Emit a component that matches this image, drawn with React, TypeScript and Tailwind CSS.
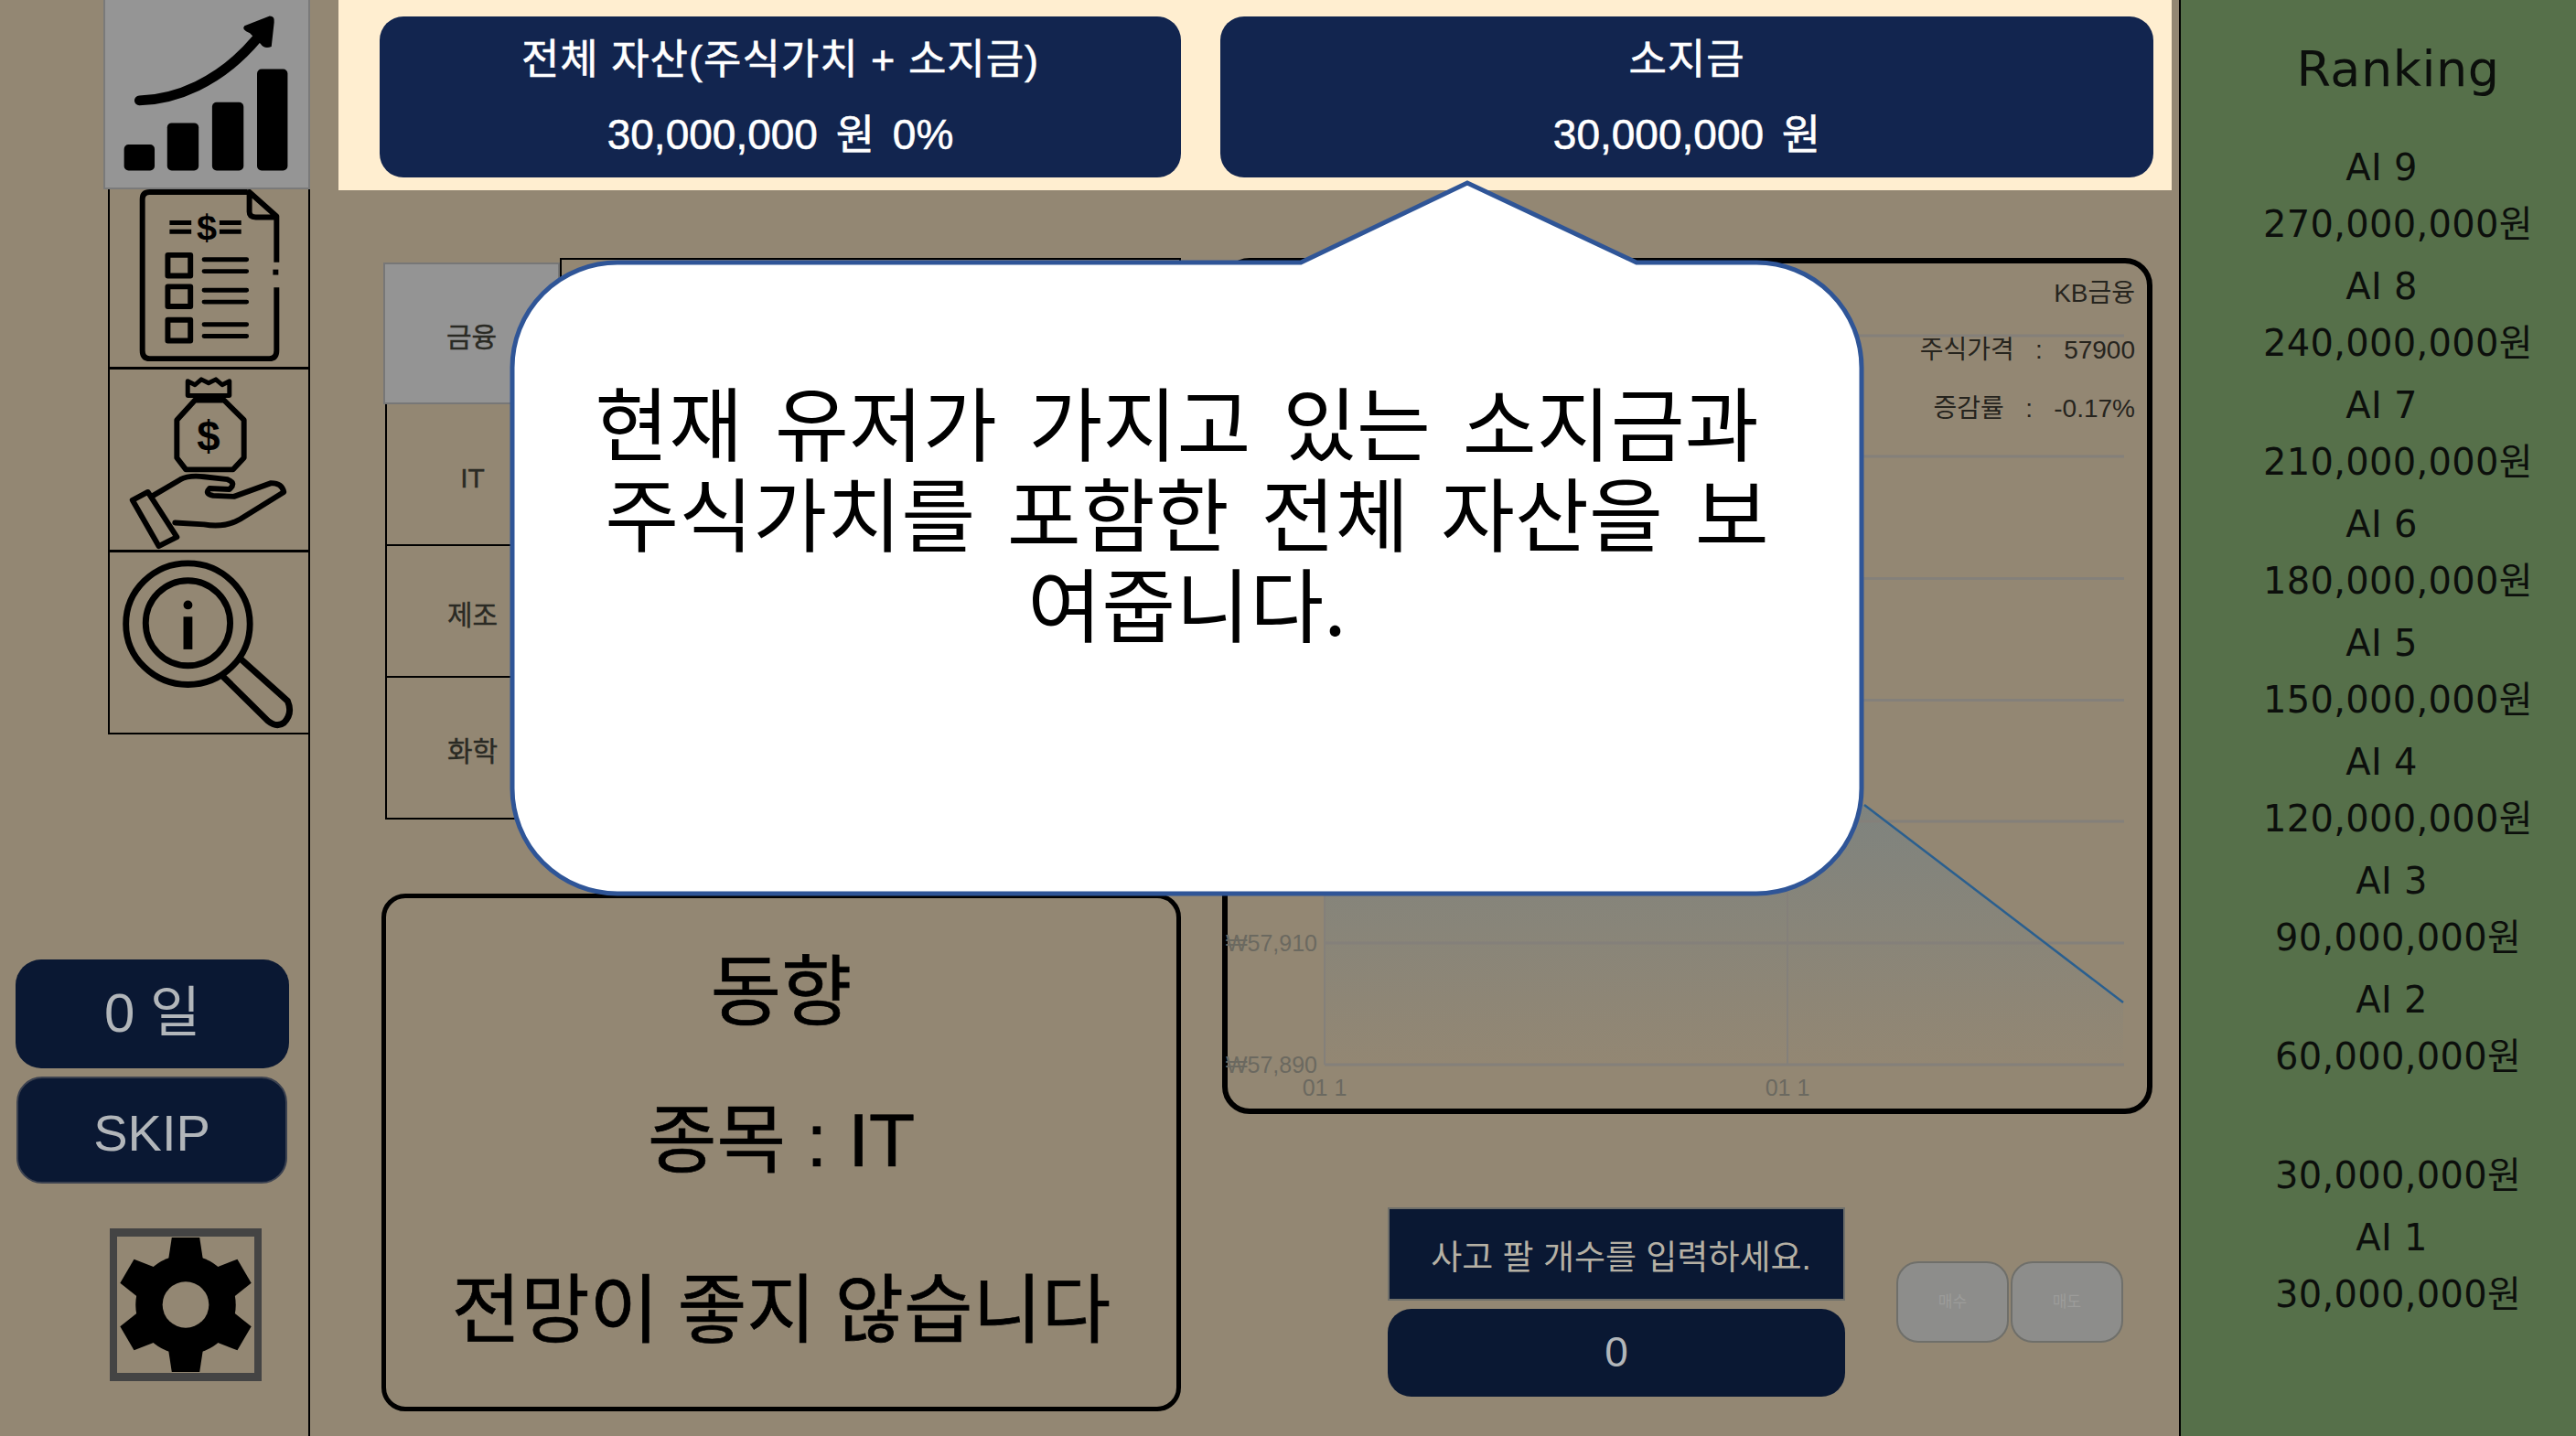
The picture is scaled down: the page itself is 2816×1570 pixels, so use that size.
import React from "react";

const Row = ({ box, h, last, children }: { box: string; h: string; last?: boolean; children: React.ReactNode }) => (
  <div className={`ml-[118px] w-[221px] border-black ${h} ${last ? "border-x-2 border-b-2" : "border-l-2 border-b-[3px]"}`}>
    <svg viewBox={box} preserveAspectRatio="none" className="block h-full w-full" fill="none" stroke="#000">
      {children}
    </svg>
  </div>
);

const ranks = [
  ["AI 9", "270,000,000원"],
  ["AI 8", "240,000,000원"],
  ["AI 7", "210,000,000원"],
  ["AI 6", "180,000,000원"],
  ["AI 5", "150,000,000원"],
  ["AI 4", "120,000,000원"],
  ["AI 3", "90,000,000원"],
  ["AI 2", "60,000,000원"],
  ["", "30,000,000원"],
  ["AI 1", "30,000,000원"],
];

const tabs = [
  { t: "금융", c: "h-[155px] bg-[#949494] border-2 border-[#777777]" },
  { t: "IT", c: "h-[155px] border-x-2 border-b-2 border-black ml-[2px]" },
  { t: "제조", c: "h-[144px] border-x-2 border-b-2 border-black ml-[2px]" },
  { t: "화학", c: "h-[155px] border-x-2 border-b-2 border-black ml-[2px]" },
];

export default function App() {
  return (
    <div className="relative flex h-[1570px] w-[2816px] overflow-hidden bg-[#938773] text-black [font-family:'Liberation_Sans','Noto_Sans_CJK_KR',sans-serif]">
      {/* left rail */}
      <aside className="flex h-full w-[339px] shrink-0 flex-col border-r-2 border-black">
        <div className="ml-[113px] h-[207px] w-[226px] border-x-2 border-b-2 border-[#7a7a7a] bg-[#959595]">
          <svg viewBox="113 0 226 207" className="block h-full w-full">
            <rect x="134" y="160" width="34" height="29" rx="5" />
            <rect x="182" y="136" width="35" height="53" rx="5" />
            <rect x="232" y="113" width="35" height="76" rx="5" />
            <rect x="282" y="76" width="34" height="113" rx="5" />
            <path d="M151 111 C190 110 240 92 282 42" fill="none" stroke="#000" strokeWidth="11" strokeLinecap="round" />
            <path d="M268 28 L296 17 Q302 17 301 24 L298 51 Q290 54 286 48 L274 36 Q264 32 268 28 Z" />
          </svg>
        </div>
        <Row box="118 207 221 197" h="h-[197px]">
          <g strokeWidth="6" strokeLinejoin="round">
            <path d="M270 210 H162 Q154 210 154 218 V386 Q154 395 162 395 H294 Q302 395 302 386 V316" />
            <path d="M302 288 V237 L272 210 V232 Q272 238 279 238 H302" />
            <path d="M301 296 V302" />
            <path d="M184 244 H208 M184 254 H208 M239 244 H263 M239 254 H263" strokeWidth="5" />
            <rect x="182" y="280" width="25" height="23" />
            <rect x="182" y="315" width="25" height="22" />
            <rect x="182" y="352" width="25" height="23" />
            <path d="M222 285 H269 M222 298 H269 M222 319 H269 M222 332 H269 M222 357 H269 M222 370 H269" strokeWidth="5" strokeLinecap="round" />
          </g>
          <text x="225" y="263" textAnchor="middle" fontSize="40" fontWeight="700" fill="#000" stroke="none" fontFamily="Liberation Sans">$</text>
        </Row>
        <Row box="118 404 221 200" h="h-[200px]">
          <g strokeWidth="6" strokeLinejoin="round" strokeLinecap="round">
            <path d="M204 417 L212 421 L219 415 L227 419 L235 415 L242 421 L250 417 V433 H204 Z" strokeWidth="5" />
            <path d="M212 438 L192 460 V502 L202 515 H254 L266 502 V460 L244 438 Z" />
            <path d="M164 545 L196 526 Q205 521 222 523 L248 526 Q258 530 250 537 L228 536 Q222 542 232 544 L255 545 L296 530 Q308 530 310 540 L262 570 Q245 580 222 576 L190 574" />
            <path d="M143 549 L160 540 L192 590 L172 600 Z" />
          </g>
          <text x="227" y="494" textAnchor="middle" fontSize="46" fontWeight="700" fill="#000" stroke="none" fontFamily="Liberation Sans">$</text>
        </Row>
        <Row box="118 604 221 199" h="h-[199px]" last>
          <g strokeWidth="7">
            <ellipse cx="205" cy="683" rx="69" ry="67" />
            <ellipse cx="205" cy="682" rx="47" ry="47" />
            <path d="M205 675 V711" strokeWidth="10" />
            <circle cx="205" cy="662" r="5" fill="#000" stroke="none" />
            <path d="M262 720 L316 768 Q322 782 312 792 Q304 798 294 790 L241 738" strokeLinejoin="round" />
          </g>
        </Row>
        <div className="ml-[17px] mt-[246px] flex h-[119px] w-[299px] items-center justify-center rounded-[28px] bg-[#0a1833] text-[60px] text-[#b2b6ba]">
          <span className="-translate-y-[1px]">0 일</span>
        </div>
        <div className="ml-[18px] mt-[9px] flex h-[117px] w-[296px] items-center justify-center rounded-[28px] border-2 border-[#3c4250] bg-[#0a1833] text-[56px] text-[#b2b6ba]">
          <span className="translate-y-[3px]">SKIP</span>
        </div>
        <div className="ml-[120px] mt-[49px] h-[167px] w-[166px] border-x-[8px] border-y-[9px] border-[#444444]">
          <svg viewBox="-74 -74 148 148" className="block h-full w-full" preserveAspectRatio="none">
            {[0, 60, 120, 180, 240, 300].map((r) => (
              <path key={r} transform={`rotate(${r})`} d="M-20 -40 L-15 -73 H15 L20 -40 Z" fill="#000" />
            ))}
            <circle r="54" fill="#000" />
            <circle r="25" fill="#938773" />
          </svg>
        </div>
      </aside>

      {/* centre */}
      <main className="w-[2043px] shrink-0">
        <header className="ml-[31px] flex h-[208px] w-[2004px] gap-[43px] bg-[#ffeed0] pl-[45px] pt-[18px]">
          <div className="flex h-[176px] w-[876px] flex-col items-center rounded-[26px] bg-[#12254f] text-white [-webkit-text-stroke:0.6px_white]">
            <div className="mt-[20px] text-[45px] leading-[56px] tracking-[1px]">전체 자산(주식가치 + 소지금)</div>
            <div className="mt-[25px] text-[46px] leading-[56px] [word-spacing:7px]">30,000,000 원 0%</div>
          </div>
          <div className="flex h-[176px] w-[1020px] flex-col items-center rounded-[26px] bg-[#12254f] text-white [-webkit-text-stroke:0.6px_white]">
            <div className="mt-[20px] text-[45px] leading-[56px] tracking-[1px]">소지금</div>
            <div className="mt-[25px] text-[46px] leading-[56px] [word-spacing:7px]">30,000,000 원</div>
          </div>
        </header>

        <div className="ml-[78px] mt-[74px] flex gap-[45px]">
          <div className="w-[874px]">
            <div className="flex h-[611px] items-start">
              <div className="ml-[2px] mt-[5px] flex w-[193px] flex-col">
                {tabs.map((x) => (
                  <div key={x.t} className={`flex items-center justify-center pt-[8px] text-[30px] text-[#2a2a24] [-webkit-text-stroke:0.4px_#2a2a24] ${x.c}`}>{x.t}</div>
                ))}
              </div>
              <div className="h-[611px] flex-1 border-2 border-black" />
            </div>
            <div className="mt-[84px] flex h-[566px] flex-col items-center rounded-[26px] border-[5px] border-black text-[82px] leading-[100px] [-webkit-text-stroke:0.7px_black]">
              <div className="mt-[53px] text-[84px]">동향</div>
              <div className="mt-[62px]">종목 : IT</div>
              <div className="mt-[86px] [word-spacing:-2px]">전망이 좋지 않습니다</div>
            </div>
          </div>

          <div className="w-[1017px]">
            <div className="relative h-[936px] rounded-[30px] border-[6px] border-black">
              <svg viewBox="1336 282 1015 934" className="absolute left-[-6px] top-[-6px] h-[934px] w-[1015px]">
                <defs>
                  <linearGradient id="area" gradientUnits="userSpaceOnUse" x1="0" y1="880" x2="0" y2="1165">
                    <stop offset="0" stopColor="#6e8088" stopOpacity="0.55" />
                    <stop offset="1" stopColor="#6e8088" stopOpacity="0" />
                  </linearGradient>
                </defs>
                <path d="M1448 700 L2038 880 L2321 1096 V1165 H1448 Z" fill="url(#area)" />
                <g stroke="#84807a" strokeWidth="3" fill="none">
                  <path d="M1448 367 H2322 M1448 499 H2322 M1448 632.5 H2322 M1448 765.5 H2322 M1448 898 H2322 M1448 1031 H2322 M1448 1164 H2322" />
                  <path d="M1448 367 V1164 M1954 367 V1164" strokeWidth="2" />
                </g>
                <path d="M2038 880 L2321 1096" stroke="#2a5f8f" strokeWidth="2.5" fill="none" />
                <g fill="#6b6960" fontSize="25" fontFamily="Liberation Sans, Noto Sans CJK KR, sans-serif">
                  <text x="1440" y="1040" textAnchor="end">₩57,910</text>
                  <text x="1440" y="1173" textAnchor="end">₩57,890</text>
                  <text x="1448" y="1198" textAnchor="middle">01 1</text>
                  <text x="1954" y="1198" textAnchor="middle">01 1</text>
                </g>
              </svg>
              <div className="absolute right-[13px] top-[13px] flex flex-col items-end text-[28px] leading-[40px] text-[#26241e]">
                <div>KB금융</div>
                <div className="mt-[22px] whitespace-pre">주식가격   :   57900</div>
                <div className="mt-[24px] whitespace-pre">증감률   :   -0.17%</div>
              </div>
            </div>
            <div className="ml-[181px] mt-[102px] flex">
              <div className="w-[500px]">
                <div className="flex h-[102px] items-center justify-center border-2 border-[#6f6f6a] bg-[#0a1833] pl-[10px] pt-[10px] text-[37px] text-[#b5b0a4]">사고 팔 개수를 입력하세요.</div>
                <div className="mt-[9px] flex h-[96px] items-center justify-center rounded-[26px] bg-[#0a1833] pb-[2px] text-[46px] text-[#b2b6ba]">0</div>
              </div>
              <div className="ml-[56px] mt-[59px] flex h-[89px] gap-[2px]">
                <div className="flex w-[123px] items-center justify-center rounded-[24px] border-2 border-[#6f6f6a] bg-[#8d8d8b] text-[17px] text-[#9c9c9a]">매수</div>
                <div className="flex w-[123px] items-center justify-center rounded-[24px] border-2 border-[#6f6f6a] bg-[#8d8d8b] text-[17px] text-[#9c9c9a]">매도</div>
              </div>
            </div>
          </div>
        </div>
      </main>

      {/* ranking */}
      <aside className="h-full flex-1 border-l-2 border-black bg-[#56704a] pl-[43px] pt-[46px] text-center text-[#0c0f0c] [font-family:'DejaVu_Sans','Noto_Sans_CJK_KR',sans-serif]">
        <div className="mb-[47px] h-[60px] text-[54px] leading-[60px] tracking-[0.5px]">Ranking</div>
        {ranks.map(([n, v], i) => (
          <div key={i} className="h-[130px] text-[40px] leading-[60px] tracking-[0.3px]">
            <div className={i >= 6 ? "h-[62px] pr-[14px]" : "h-[62px] pr-[36px]"}>{n}</div>
            <div>{v}</div>
          </div>
        ))}
      </aside>

      {/* callout overlay */}
      <div className="absolute left-[555px] top-[195px] h-[790px] w-[1485px]">
        <svg viewBox="555 195 1485 790" className="absolute inset-0 h-full w-full">
          <path
            d="M675 287 H1422 L1604 200 L1789 287 H1920 A115 115 0 0 1 2035 402 V862 A115 115 0 0 1 1920 977 H675 A115 115 0 0 1 560 862 V402 A115 115 0 0 1 675 287 Z"
            fill="#fff"
            stroke="#2f5597"
            strokeWidth="5"
          />
        </svg>
        <div className="absolute left-0 top-[214px] w-full text-center text-[88px] leading-[99px] text-black [font-family:'Noto_Sans_CJK_KR',sans-serif] [word-spacing:15px]">
          <div className="pr-[22px]">현재 유저가 가지고 있는 소지금과</div>
          <div>주식가치를 포함한 전체 자산을 보</div>
          <div>여줍니다.</div>
        </div>
      </div>
    </div>
  );
}
